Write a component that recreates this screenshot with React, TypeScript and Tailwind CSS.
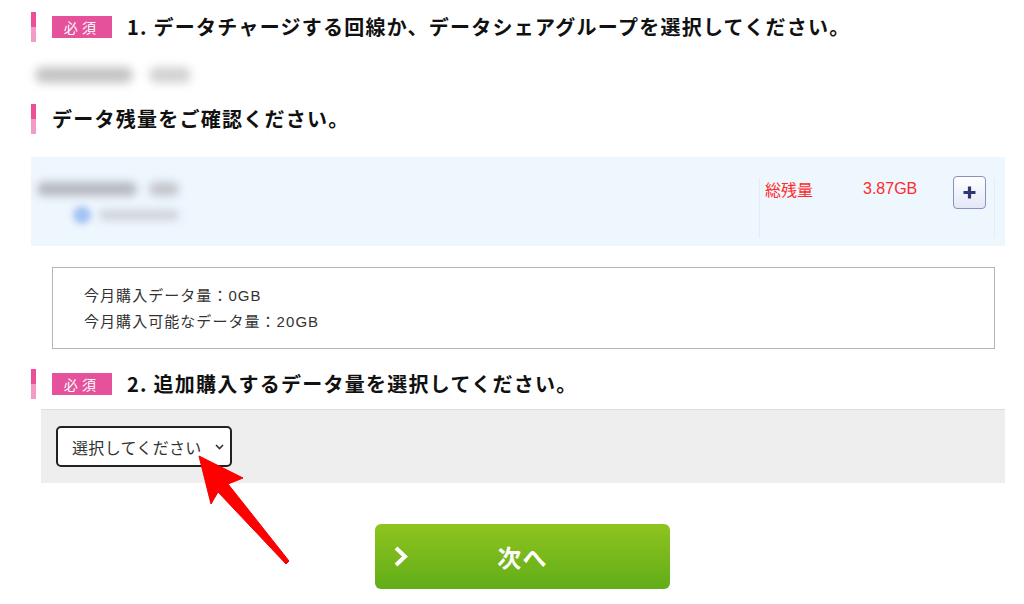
import React from "react";

const jp = { fontFamily: '"Noto Sans CJK JP", "Noto Sans", sans-serif' };
const latin = { fontFamily: '"Liberation Sans", "Noto Sans CJK JP", sans-serif' };

function Bar() {
  return (
    <div className="flex h-[30px] w-[5px] flex-col">
      <div className="flex-1 bg-[#ea4f98]" />
      <div className="flex-1 bg-[#f39ac6]" />
    </div>
  );
}

function Required() {
  return (
    <span className="ml-[16px] flex h-[22px] w-[60px] items-center justify-center bg-[#e5519b] text-[14px] tracking-[0.3em] text-white">
      必須
    </span>
  );
}

function Heading({ required, children }: { required?: boolean; children: React.ReactNode }) {
  return (
    <div className="flex items-center">
      <Bar />
      {required && <Required />}
      <h2
        className={`${required ? "ml-[15px]" : "ml-[16px]"} text-[20px] font-bold leading-none tracking-[1.25px] text-[#111]`}
      >
        {children}
      </h2>
    </div>
  );
}

function RedArrow() {
  return (
    <svg className="pointer-events-none absolute left-0 top-0" width="1024" height="604">
      <polygon
        points="199,456 243,478 228,484 289,561 286,564 218,492 211,504"
        fill="#ff0000"
        stroke="#f20000"
        strokeWidth="1"
        strokeLinejoin="round"
      />
    </svg>
  );
}

export default function App() {
  return (
    <div className="relative h-[604px] w-[1024px] overflow-hidden bg-white" style={jp}>
      <div className="pl-[31px] pr-[19px] pt-[12px]">
        <Heading required>1. データチャージする回線か、データシェアグループを選択してください。</Heading>

        {/* blurred line name */}
        <div className="mt-[16px] flex h-[34px] items-center gap-[16px] pl-[4px]">
          <span className="h-[16px] w-[98px] rounded-full bg-[#c4c4c4] blur-[5px]" />
          <span className="h-[16px] w-[42px] rounded-full bg-[#d2d2d2] blur-[5px]" />
        </div>

        <div className="mt-[12px]">
          <Heading>データ残量をご確認ください。</Heading>
        </div>

        {/* remaining data */}
        <div className="mt-[23px] flex h-[89px] items-start bg-[#eef6fe] pr-[10px] pt-[21px]">
          <div className="flex flex-col gap-[10px] pl-[6px] pt-[4px]">
            <div className="flex items-center gap-[12px]">
              <span className="h-[14px] w-[100px] rounded-full bg-[#b6b9bf] blur-[4px]" />
              <span className="h-[14px] w-[30px] rounded-full bg-[#c3c6cb] blur-[4px]" />
            </div>
            <div className="flex items-center gap-[8px] pl-[36px]">
              <span className="h-[18px] w-[18px] rounded-full bg-[#a4c2f2] blur-[3px]" />
              <span className="h-[10px] w-[80px] rounded-full bg-[#cdd1d8] blur-[4px]" />
            </div>
          </div>
          <div className="ml-auto flex h-[60px] w-[236px] items-start border-x border-[#e3ecf6] pl-[5px]">
            <span className="mt-[1px] text-[16px] leading-[20px] text-[#ff2a2a]">総残量</span>
            <span className="ml-[50px] mt-[1px] text-[16px] leading-[20px] text-[#ff2a2a]" style={latin}>
              3.87GB
            </span>
            <button className="ml-auto mr-[8px] -mt-[2px] flex h-[33px] w-[33px] items-center justify-center rounded-[4px] border border-[#8b90c2] bg-gradient-to-b from-white to-[#e3e8f6]">
              <svg width="15" height="15" viewBox="0 0 15 15">
                <path d="M7.5 1.5v12M1.5 7.5h12" stroke="#2d3670" strokeWidth="3.2" />
              </svg>
            </button>
          </div>
        </div>

        {/* purchase info */}
        <div className="ml-[21px] mr-[10px] mt-[21px] flex h-[82px] flex-col justify-center border border-[#b3b3b3] pl-[31px] text-[15px] leading-[25px] tracking-[0.07em] text-[#333]">
          <p>
            今月購入データ量：<span style={latin}>0GB</span>
          </p>
          <p>
            今月購入可能なデータ量：<span style={latin}>20GB</span>
          </p>
        </div>

        <div className="mt-[20px]">
          <Heading required>2. 追加購入するデータ量を選択してください。</Heading>
        </div>

        {/* select amount */}
        <div className="ml-[10px] mt-[10px] flex h-[74px] items-center border-t border-[#dddddd] bg-[#eeeeee] pl-[15px]">
          <div className="flex h-[41px] w-[176px] items-center justify-between rounded-[5px] border-2 border-[#222] bg-white pl-[14px] pr-[6px]">
            <span className="text-[16px] tracking-[0.02em] text-[#333]">選択してください</span>
            <svg width="9" height="6" viewBox="0 0 9 6">
              <path d="M1 1l3.5 3.5L8 1" stroke="#333" strokeWidth="1.6" fill="none" />
            </svg>
          </div>
        </div>

        {/* next */}
        <div className="mt-[41px] flex justify-center">
          <button className="relative ml-[9px] flex h-[65px] w-[295px] items-center justify-center rounded-[6px] bg-gradient-to-b from-[#8ec41f] to-[#61ad18]">
            <svg className="absolute left-[18px] top-[21px]" width="16" height="23" viewBox="0 0 16 23">
              <path d="M3 3l9 8.5L3 20" stroke="white" strokeWidth="4" fill="none" />
            </svg>
            <span className="text-[24px] font-bold tracking-[0.05em] text-white">次へ</span>
          </button>
        </div>
      </div>

      <RedArrow />
    </div>
  );
}
